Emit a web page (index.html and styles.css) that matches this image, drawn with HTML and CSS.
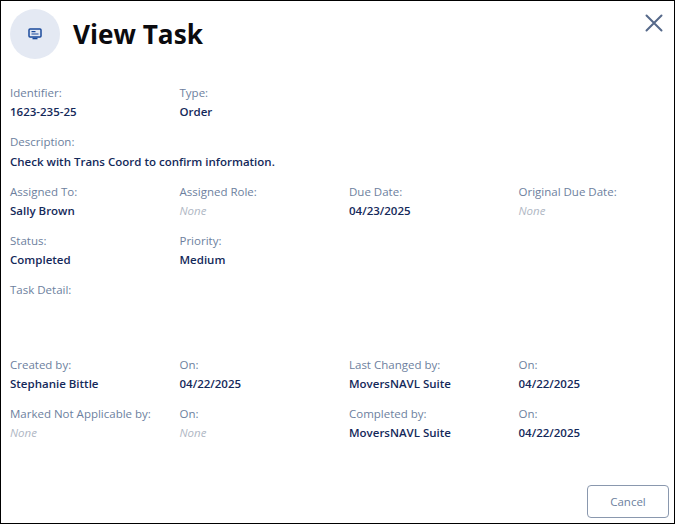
FILE: index.html
```html
<!DOCTYPE html>
<html lang="en">
<head>
<meta charset="utf-8">
<title>View Task</title>
<link rel="stylesheet" href="styles.css">
</head>
<body>
<div class="dialog">
  <header class="head">
    <div class="avatar">
      <svg width="14" height="12" viewBox="0 0 14 12" fill="none"><rect x="1" y="1" width="12" height="8" rx="1" stroke="#1a4a9c" stroke-width="1.5"/><path d="M3.5 3.6h4M3.5 6h7" stroke="#1a4a9c" stroke-width="1.2"/><path d="M4.5 10.5h5" stroke="#1a4a9c" stroke-width="1.6"/></svg>
    </div>
    <h1 class="title">View Task</h1>
    <button class="close" aria-label="Close">
      <svg width="18" height="18" viewBox="0 0 18 18" fill="none"><path d="M1.5 1.5l15 15M16.5 1.5l-15 15" stroke="#56698a" stroke-width="2" stroke-linecap="round"/></svg>
    </button>
  </header>
  <main class="fields">
    <div class="row">
      <div class="field"><div class="label">Identifier:</div><div class="value">1623-235-25</div></div>
      <div class="field"><div class="label">Type:</div><div class="value">Order</div></div>
    </div>
    <div class="row">
      <div class="field wide"><div class="label">Description:</div><div class="value">Check with Trans Coord to confirm information.</div></div>
    </div>
    <div class="row">
      <div class="field"><div class="label">Assigned To:</div><div class="value">Sally Brown</div></div>
      <div class="field"><div class="label">Assigned Role:</div><div class="value none">None</div></div>
      <div class="field"><div class="label">Due Date:</div><div class="value">04/23/2025</div></div>
      <div class="field"><div class="label">Original Due Date:</div><div class="value none">None</div></div>
    </div>
    <div class="row">
      <div class="field"><div class="label">Status:</div><div class="value">Completed</div></div>
      <div class="field"><div class="label">Priority:</div><div class="value">Medium</div></div>
    </div>
    <div class="row detail">
      <div class="field wide"><div class="label">Task Detail:</div></div>
    </div>
    <div class="row">
      <div class="field"><div class="label">Created by:</div><div class="value">Stephanie Bittle</div></div>
      <div class="field"><div class="label">On:</div><div class="value">04/22/2025</div></div>
      <div class="field"><div class="label">Last Changed by:</div><div class="value">MoversNAVL Suite</div></div>
      <div class="field"><div class="label">On:</div><div class="value">04/22/2025</div></div>
    </div>
    <div class="row">
      <div class="field"><div class="label">Marked Not Applicable by:</div><div class="value none">None</div></div>
      <div class="field"><div class="label">On:</div><div class="value none">None</div></div>
      <div class="field"><div class="label">Completed by:</div><div class="value">MoversNAVL Suite</div></div>
      <div class="field"><div class="label">On:</div><div class="value">04/22/2025</div></div>
    </div>
  </main>
  <footer class="foot"><button class="cancel">Cancel</button></footer>
</div>
</body>
</html>
```
FILE: styles.css
```css
* { box-sizing: border-box; }
html, body { margin: 0; height: 100%; }
body { font-family: "Open Sans", "Noto Sans", sans-serif; background: #fff; }
.dialog {
  height: 524px;
  border: 1px solid #000;
  display: flex;
  flex-direction: column;
  padding: 8px 5px 5px 9px;
}
.head { display: flex; align-items: center; height: 50px; }
.avatar {
  width: 50px; height: 50px; border-radius: 50%;
  background: #e4e9f3;
  display: flex; align-items: center; justify-content: center;
}
.title { margin: 0 0 0 13px; font-size: 26.2px; font-weight: 700; color: #0b0b0f; line-height: 50px; flex: 1; }
.close { border: 0; background: none; padding: 0; width: 18px; height: 18px; margin: -22px 6px 0 0; display: flex; }
.fields { margin-top: 23.8px; flex: 1; }
.row { display: grid; grid-template-columns: repeat(4, 169.5px); height: 49.4px; }
.row.detail { height: 74.2px; }
.field.wide { grid-column: 1 / -1; }
.label { font-size: 11.5px; line-height: 19.5px; color: #6d7f9e; }
.value { font-size: 11.5px; line-height: 19.5px; font-weight: 600; color: #14295a; }
.value.none { font-weight: 400; font-style: italic; color: #b0b7c4; }
.foot { display: flex; justify-content: flex-end; }
.cancel {
  width: 82px; height: 33px;
  border: 1px solid #8a98ae; border-radius: 4px;
  background: #fff; color: #6d7f9e;
  font: 400 11.5px "Open Sans", "Noto Sans", sans-serif;
}
```
